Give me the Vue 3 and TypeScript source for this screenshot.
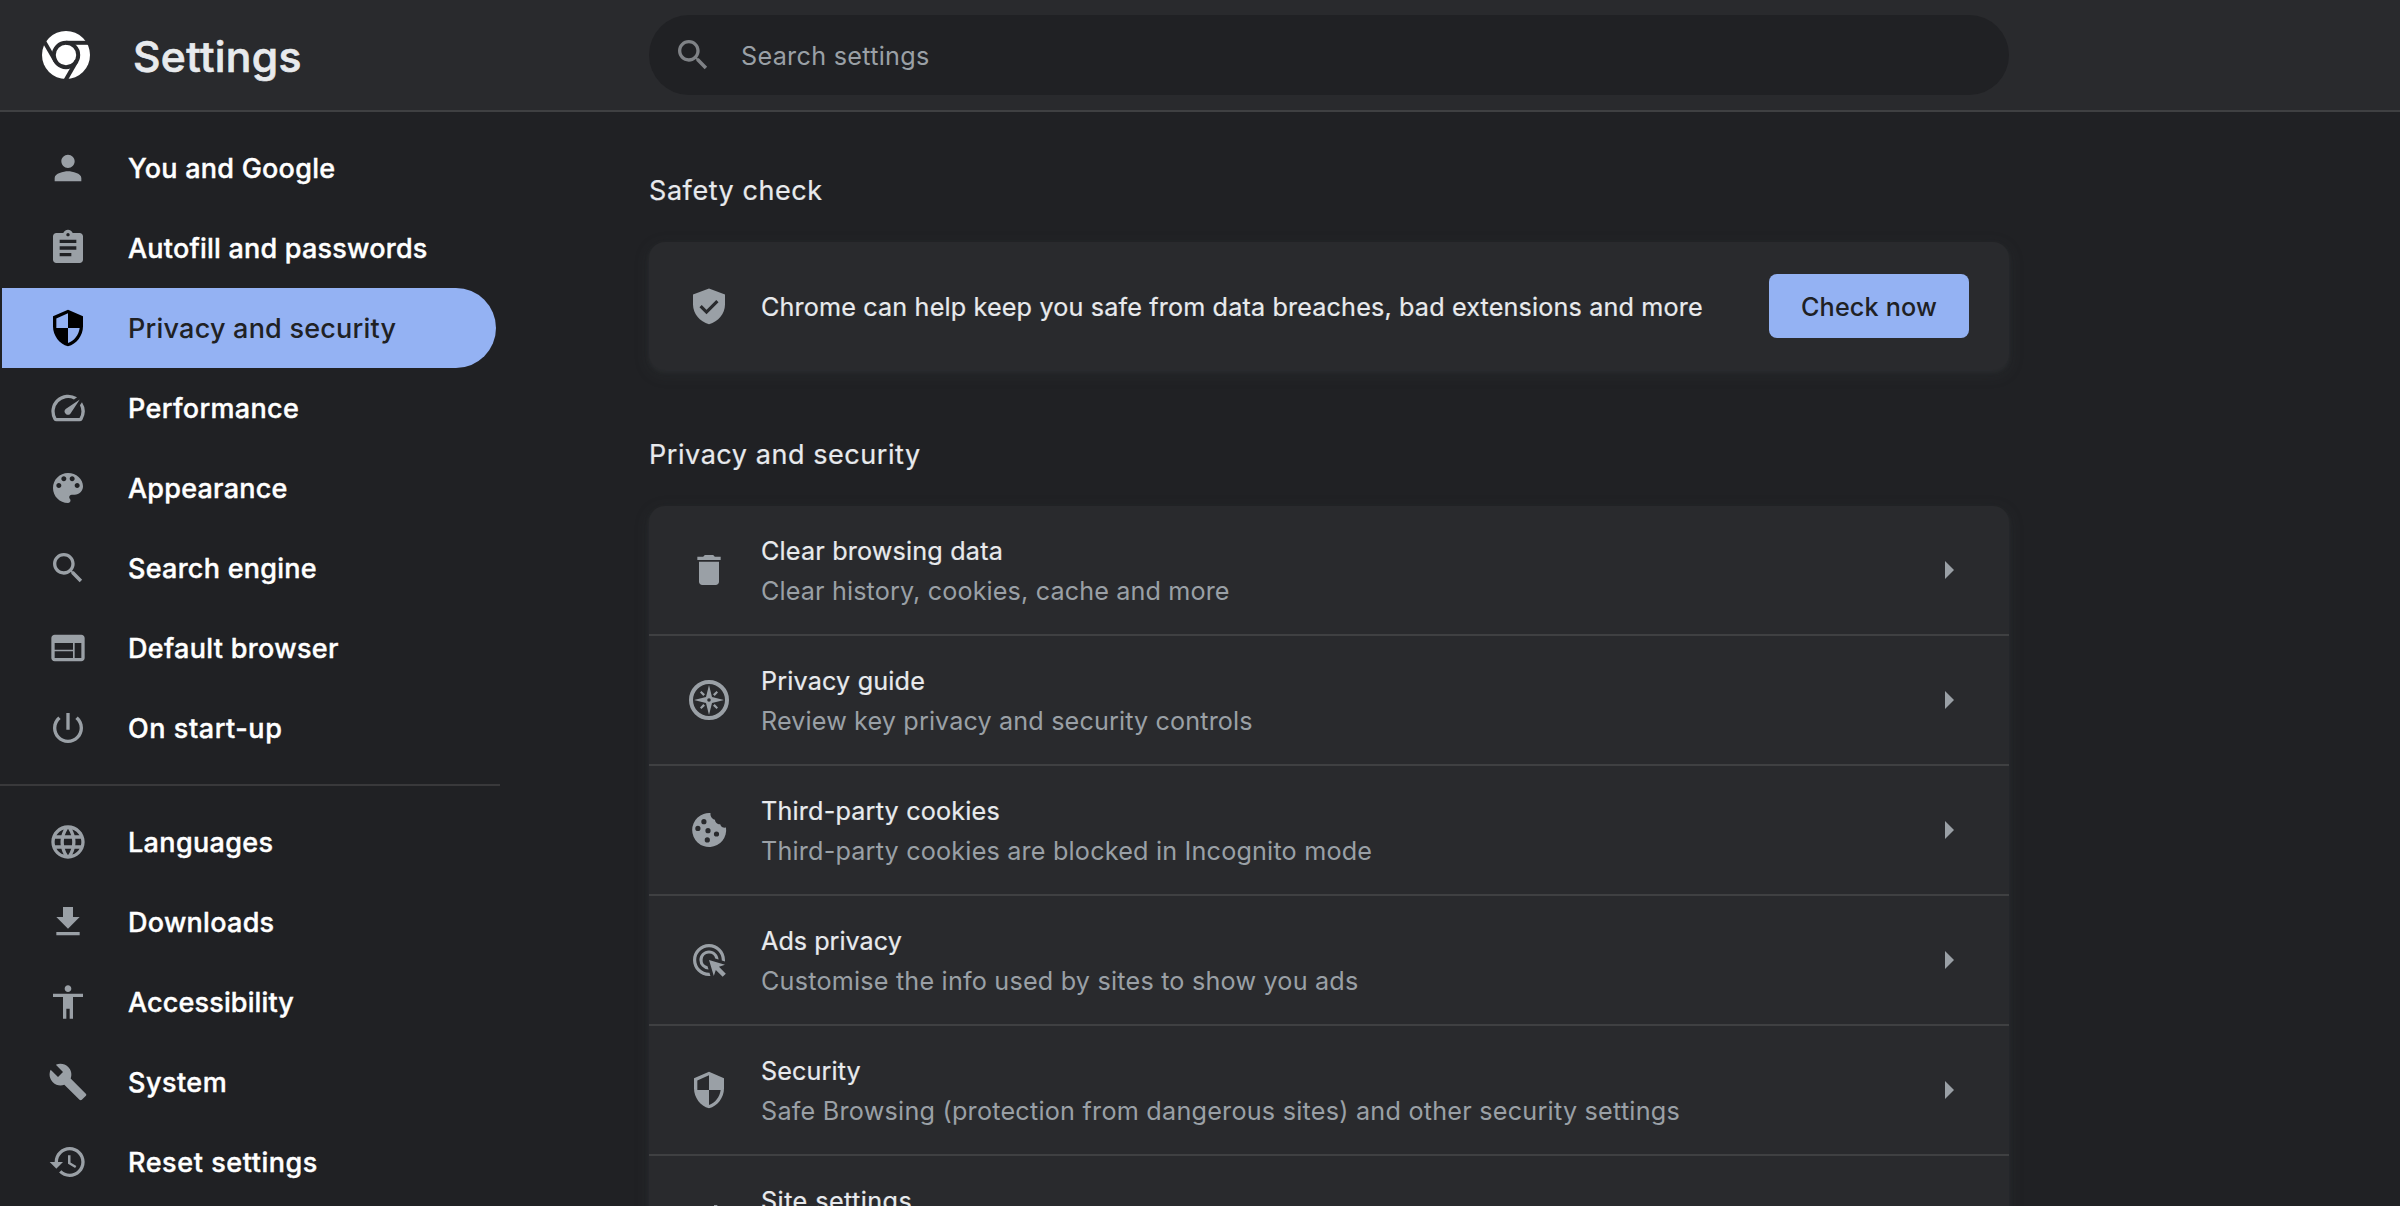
<script setup lang="ts">
interface NavItem {
  label: string
  icon: string
  tracking: number
  active?: boolean
}

interface SettingRow {
  title: string
  titleTracking: number
  sub: string
  subTracking: number
  icon: 'delete' | 'guide' | 'cookie' | 'ads' | 'security' | 'tune'
}

const shieldPath =
  'M12 1L3 5v6c0 5.55 3.84 10.74 9 12 5.16-1.26 9-6.45 9-12V5l-9-4zm0 10.99h7c-.53 4.12-3.28 7.79-7 8.94V12H5V6.3l7-3.11v8.8z'
const searchPath =
  'M15.5 14h-.79l-.28-.27C15.41 12.59 16 11.11 16 9.5 16 5.91 13.09 3 9.5 3S3 5.91 3 9.5 5.91 16 9.5 16c1.61 0 3.09-.59 4.23-1.57l.27.28v.79l5 4.99L20.49 19l-4.99-5zm-6 0C7.01 14 5 11.99 5 9.5S7.01 5 9.5 5 14 7.01 14 9.5 11.99 14 9.5 14z'

const primaryNav: NavItem[] = [
  {
    label: 'You and Google',
    tracking: 0.247,
    icon: 'M12 12c2.21 0 4-1.79 4-4s-1.79-4-4-4-4 1.79-4 4 1.79 4 4 4zm0 2c-2.67 0-8 1.34-8 4v2h16v-2c0-2.66-5.33-4-8-4z',
  },
  {
    label: 'Autofill and passwords',
    tracking: 0.22,
    icon: 'M19 3h-4.18C14.4 1.84 13.3 1 12 1c-1.3 0-2.4.84-2.82 2H5c-1.1 0-2 .9-2 2v14c0 1.1.9 2 2 2h14c1.1 0 2-.9 2-2V5c0-1.1-.9-2-2-2zm-7 0c.55 0 1 .45 1 1s-.45 1-1 1-1-.45-1-1 .45-1 1-1zm2 14H7v-2h7v2zm3-4H7v-2h10v2zm0-4H7V7h10v2z',
  },
  { label: 'Privacy and security', tracking: 0.216, icon: shieldPath, active: true },
  {
    label: 'Performance',
    tracking: 0.33,
    icon: 'M20.38 8.57l-1.23 1.85a8 8 0 0 1-.22 7.58H5.07A8 8 0 0 1 15.58 6.85l1.85-1.23A10 10 0 0 0 3.35 19a2 2 0 0 0 1.72 1h13.85a2 2 0 0 0 1.74-1 10 10 0 0 0-.27-10.44zm-9.79 6.84a2 2 0 0 0 2.83 0l5.66-8.49-8.49 5.66a2 2 0 0 0 0 2.83z',
  },
  {
    label: 'Appearance',
    tracking: 0.227,
    icon: 'M12 3c-4.97 0-9 4.03-9 9s4.03 9 9 9c.83 0 1.5-.67 1.5-1.5 0-.39-.15-.74-.39-1.01-.23-.26-.38-.61-.38-.99 0-.83.67-1.5 1.5-1.5H16c2.76 0 5-2.24 5-5 0-4.42-4.03-8-9-8zm-5.5 9c-.83 0-1.5-.67-1.5-1.5S5.67 9 6.5 9 8 9.67 8 10.5 7.33 12 6.5 12zm3-4C8.67 8 8 7.33 8 6.5S8.67 5 9.5 5s1.5.67 1.5 1.5S10.33 8 9.5 8zm5 0c-.83 0-1.5-.67-1.5-1.5S13.67 5 14.5 5s1.5.67 1.5 1.5S15.33 8 14.5 8zm3 4c-.83 0-1.5-.67-1.5-1.5S16.67 9 17.5 9s1.5.67 1.5 1.5-.67 1.5-1.5 1.5z',
  },
  { label: 'Search engine', tracking: 0.26, icon: searchPath },
  {
    label: 'Default browser',
    tracking: 0.32,
    icon: 'M20 4H4c-1.1 0-1.99.9-1.99 2L2 18c0 1.1.9 2 2 2h16c1.1 0 2-.9 2-2V6c0-1.1-.9-2-2-2zm-5 14H4v-4h11v4zm0-5H4V9h11v4zm5 5h-4V9h4v9z',
  },
  {
    label: 'On start-up',
    tracking: 0.55,
    icon: 'M13 3h-2v10h2V3zm4.83 2.17l-1.42 1.42C17.99 7.86 19 9.81 19 12c0 3.87-3.13 7-7 7s-7-3.13-7-7c0-2.19 1.01-4.14 2.58-5.42L6.17 5.17C4.23 6.82 3 9.26 3 12c0 4.97 4.03 9 9 9s9-4.03 9-9c0-2.74-1.23-5.18-3.17-6.83z',
  },
]

const secondaryNav: NavItem[] = [
  {
    label: 'Languages',
    tracking: 0.35,
    icon: 'M11.99 2C6.47 2 2 6.48 2 12s4.47 10 9.99 10C17.52 22 22 17.52 22 12S17.52 2 11.99 2zm6.93 6h-2.95c-.32-1.25-.78-2.45-1.38-3.56 1.84.63 3.37 1.91 4.33 3.56zM12 4.04c.83 1.2 1.48 2.53 1.91 3.96h-3.82c.43-1.43 1.08-2.76 1.91-3.96zM4.26 14C4.1 13.36 4 12.69 4 12s.1-1.36.26-2h3.38c-.08.66-.14 1.32-.14 2 0 .68.06 1.34.14 2H4.26zm.82 2h2.95c.32 1.25.78 2.45 1.38 3.56-1.84-.63-3.37-1.9-4.33-3.56zm2.95-8H5.08c.96-1.66 2.49-2.93 4.33-3.56C8.81 5.55 8.35 6.75 8.03 8zM12 19.96c-.83-1.2-1.48-2.53-1.91-3.96h3.82c-.43 1.43-1.08 2.76-1.91 3.96zM14.34 14H9.66c-.09-.66-.16-1.32-.16-2 0-.68.07-1.35.16-2h4.68c.09.65.16 1.32.16 2 0 .68-.07 1.34-.16 2zm.25 5.56c.6-1.11 1.06-2.31 1.38-3.56h2.95c-.96 1.65-2.49 2.93-4.33 3.56zM16.36 14c.08-.66.14-1.32.14-2 0-.68-.06-1.34-.14-2h3.38c.16.64.26 1.31.26 2s-.1 1.36-.26 2h-3.38z',
  },
  { label: 'Downloads', tracking: 0.28, icon: 'M19 9h-4V3H9v6H5l7 7 7-7zM5 18v2h14v-2H5z' },
  {
    label: 'Accessibility',
    tracking: 0.14,
    icon: 'M12 2c1.1 0 2 .9 2 2s-.9 2-2 2-2-.9-2-2 .9-2 2-2zm9 7h-6v13h-2v-6h-2v6H9V9H3V7h18v2z',
  },
  {
    label: 'System',
    tracking: 0.48,
    icon: 'M22.7 19l-9.1-9.1c.9-2.3.4-5-1.5-6.9-2-2-5-2.4-7.4-1.3L9 6 6 9 1.6 4.7C.4 7.1.9 10.1 2.9 12.1c1.9 1.9 4.6 2.4 6.9 1.5l9.1 9.1c.4.4 1 .4 1.4 0l2.3-2.3c.5-.4.5-1.1.1-1.4z',
  },
  {
    label: 'Reset settings',
    tracking: 0.56,
    icon: 'M13 3c-4.97 0-9 4.03-9 9H1l3.89 3.89.07.14L9 12H6c0-3.87 3.13-7 7-7s7 3.13 7 7-3.13 7-7 7c-1.93 0-3.68-.79-4.94-2.06l-1.42 1.42C8.27 19.99 10.51 21 13 21c4.97 0 9-4.03 9-9s-4.03-9-9-9zm-1 5v5l4.28 2.54.72-1.21-3.5-2.08V8H12z',
  },
]

const navGroups: NavItem[][] = [primaryNav, secondaryNav]

const rows: SettingRow[] = [
  {
    title: 'Clear browsing data',
    titleTracking: 0.17,
    sub: 'Clear history, cookies, cache and more',
    subTracking: 0.125,
    icon: 'delete',
  },
  {
    title: 'Privacy guide',
    titleTracking: 0.16,
    sub: 'Review key privacy and security controls',
    subTracking: 0.13,
    icon: 'guide',
  },
  {
    title: 'Third-party cookies',
    titleTracking: 0.18,
    sub: 'Third-party cookies are blocked in Incognito mode',
    subTracking: 0.185,
    icon: 'cookie',
  },
  {
    title: 'Ads privacy',
    titleTracking: 0,
    sub: 'Customise the info used by sites to show you ads',
    subTracking: 0.2,
    icon: 'ads',
  },
  {
    title: 'Security',
    titleTracking: 0.095,
    sub: 'Safe Browsing (protection from dangerous sites) and other security settings',
    subTracking: 0.232,
    icon: 'security',
  },
  { title: 'Site settings', titleTracking: 0.434, sub: '', subTracking: 0, icon: 'tune' },
]

const track = (px: number) => ({ letterSpacing: `${px}px` })
</script>

<template>
  <div class="page">
    <header class="toolbar">
      <div class="brand">
        <svg class="logo" viewBox="-24 -24 48 48">
          <circle r="24" fill="#fff" />
          <g class="logo-gap">
            <circle r="12.2" />
            <path d="M0-12.2H26" />
            <path d="M0-12.2H26" transform="rotate(120)" />
            <path d="M0-12.2H26" transform="rotate(240)" />
          </g>
        </svg>
        <h1>Settings</h1>
      </div>
      <div class="search">
        <svg class="icon" viewBox="0 0 24 24"><path :d="searchPath" /></svg>
        <span>Search settings</span>
      </div>
    </header>

    <div class="body">
      <nav class="sidebar">
        <ul v-for="(group, g) in navGroups" :key="g" class="group">
          <li v-for="item in group" :key="item.label" class="nav-item" :class="{ active: item.active }">
            <svg class="icon" viewBox="0 0 24 24"><path :d="item.icon" /></svg>
            <span :style="track(item.tracking)">{{ item.label }}</span>
          </li>
        </ul>
      </nav>

      <main class="content">
        <h2>Safety check</h2>
        <section class="card safety">
          <svg class="icon" viewBox="0 0 40 40">
            <path d="M20 1.4L36 7.4V17.6C36 26.6 29.4 34.8 20 37.2 10.6 34.8 4 26.6 4 17.6V7.4z" />
            <path class="check" d="M11.6 19.2l5.9 5.9L28.4 14.2" />
          </svg>
          <p>Chrome can help keep you safe from data breaches, bad extensions and more</p>
          <button type="button">Check now</button>
        </section>

        <h2 class="second">Privacy and security</h2>
        <section class="card">
          <div v-for="row in rows" :key="row.title" class="row">
            <svg v-if="row.icon === 'delete'" class="icon" viewBox="0 0 24 24">
              <path d="M6 19c0 1.1.9 2 2 2h8c1.1 0 2-.9 2-2V7H6v12zM19 4h-3.5l-1-1h-5l-1 1H5v2h14V4z" />
            </svg>
            <svg v-else-if="row.icon === 'guide'" class="icon" viewBox="0 0 40 40">
              <circle class="ring" cx="20" cy="20" r="18" />
              <path
                fill-rule="evenodd"
                d="M20 5l3 12 12 3-12 3-3 12-3-12-12-3 12-3zM20 18.2a1.8 1.8 0 1 0 0 3.6 1.8 1.8 0 0 0 0-3.6z"
              />
              <path
                d="M11 12.4l1.4-1.4 3.6 3.3-1.7 1.7zM29 12.4L27.6 11 24 14.3l1.7 1.7zM11 27.6l1.4 1.4 3.6-3.3-1.7-1.7zM29 27.6L27.6 29 24 25.7l1.7-1.7z"
              />
            </svg>
            <svg v-else-if="row.icon === 'cookie'" class="icon" viewBox="0 0 40 40">
              <path
                fill-rule="evenodd"
                d="M21.5 3.1A17 17 0 1 0 37 17.6C34.5 18 31.8 17 31.2 14.2 28.6 14.4 26 12.5 26 9.7 23.3 9.5 21 6.5 21.5 3.1zM14.9 9.1a2.6 2.6 0 1 1 0 5.2 2.6 2.6 0 0 1 0-5.2zM8.9 15.8a2.6 2.6 0 1 1 0 5.2 2.6 2.6 0 0 1 0-5.2zM19 18.1a2.6 2.6 0 1 1 0 5.2 2.6 2.6 0 0 1 0-5.2zM27.5 21.4a2.6 2.6 0 1 1 0 5.2 2.6 2.6 0 0 1 0-5.2zM18.3 27.3a2.6 2.6 0 1 1 0 5.2 2.6 2.6 0 0 1 0-5.2z"
              />
            </svg>
            <svg v-else-if="row.icon === 'ads'" class="icon" viewBox="-0.5 -0.5 25 25">
              <path
                d="M11.71 17.99A5.993 5.993 0 0 1 6 12c0-3.31 2.69-6 6-6 3.22 0 5.84 2.53 5.99 5.71l-2.1-.63a3.999 3.999 0 1 0-4.81 4.81l.63 2.1zM22 12c0 .3-.01.6-.04.9l-1.97-.59c.01-.1.01-.21.01-.31 0-4.42-3.58-8-8-8s-8 3.58-8 8 3.58 8 8 8c.1 0 .21 0 .31-.01l.59 1.97c-.3.03-.6.04-.9.04-5.52 0-10-4.48-10-10S6.48 2 12 2s10 4.48 10 10zm-3.77 4.26L22 15l-10-3 3 10 1.26-3.77 4.27 4.27 1.98-1.98-4.28-4.26z"
              />
            </svg>
            <svg v-else-if="row.icon === 'security'" class="icon" viewBox="0 0 24 24">
              <path :d="shieldPath" />
            </svg>
            <svg v-else class="icon" viewBox="0 0 24 24">
              <path
                d="M3 17v2h6v-2H3zM3 5v2h10V5H3zm10 16v-2h8v-2h-8v-2h-2v6h2zM7 9v2H3v2h4v2h2V9H7zm14 4v-2H11v2h10zm-6-4h2V7h4V5h-4V3h-2v6z"
              />
            </svg>
            <div class="text">
              <div class="title" :style="track(row.titleTracking)">{{ row.title }}</div>
              <div class="sub" :style="track(row.subTracking)">{{ row.sub }}</div>
            </div>
            <svg class="arrow" viewBox="0 0 9 18"><path d="M0 0l9 9-9 9z" /></svg>
          </div>
        </section>
      </main>
    </div>
  </div>
</template>

<style>
body {
  margin: 0;
  background: #202124;
}
</style>

<style scoped>
.page {
  width: 2400px;
  height: 1206px;
  overflow: hidden;
  display: flex;
  flex-direction: column;
  background: #202124;
  color: #e8eaed;
  font-family: Inter, 'Liberation Sans', sans-serif;
  font-size: 25.2px;
}

h1,
h2,
p,
ul {
  margin: 0;
  padding: 0;
  font-weight: 400;
}

.icon {
  flex: none;
  display: block;
  width: 40px;
  height: 40px;
  fill: #9aa0a6;
}

.toolbar {
  flex: none;
  display: flex;
  align-items: center;
  height: 110px;
  background: #292a2d;
  border-bottom: 2px solid #3f4042;
}

.brand {
  box-sizing: border-box;
  display: flex;
  align-items: center;
  gap: 43px;
  width: 649px;
  padding-left: 42px;
}

.logo {
  width: 48px;
  height: 48px;
}

.logo-gap {
  fill: none;
  stroke: #292a2d;
  stroke-width: 4;
}

h1 {
  padding-top: 3px;
  font-size: 42.6px;
  line-height: 56px;
  font-weight: 500;
  letter-spacing: 0.35px;
  -webkit-text-stroke: 0.7px currentColor;
}

.search {
  box-sizing: border-box;
  display: flex;
  align-items: center;
  gap: 28px;
  width: 1360px;
  height: 80px;
  padding-left: 24px;
  border-radius: 40px;
  background: #202124;
  color: #9aa0a6;
  letter-spacing: 0.29px;
}

.search .icon {
  fill: #7f8286;
}

.search span {
  padding-top: 2px;
}

.body {
  flex: 1;
  min-height: 0;
  display: flex;
}

.sidebar {
  flex: none;
  width: 500px;
  margin-right: 149px;
}

.group {
  padding: 16px 0;
  list-style: none;
}

.group + .group {
  border-top: 2px solid #39393b;
}

.nav-item {
  box-sizing: border-box;
  display: flex;
  align-items: center;
  gap: 40px;
  width: 494px;
  height: 80px;
  margin-left: 2px;
  padding-left: 46px;
  border-radius: 0 40px 40px 0;
  color: #fff;
  font-size: 27px;
  font-weight: 500;
  -webkit-text-stroke: 0.4px currentColor;
}

.nav-item.active {
  background: #94b2f3;
  color: #202124;
  -webkit-text-stroke-width: 0;
}

.nav-item.active .icon {
  fill: #000;
}

.content {
  width: 1360px;
}

h2 {
  margin: 59px 0 31px;
  font-size: 27px;
  line-height: 40px;
  letter-spacing: 0.563px;
  -webkit-text-stroke: 0.2px currentColor;
}

h2.second {
  margin-top: 65px;
  letter-spacing: 0.56px;
}

.card {
  border-radius: 16px;
  background: #292a2d;
  box-shadow:
    0 2px 4px rgba(60, 64, 67, 0.3),
    0 4px 12px 4px rgba(60, 64, 67, 0.15);
}

.safety {
  box-sizing: border-box;
  display: flex;
  align-items: center;
  height: 128px;
  padding: 0 40px;
}

.safety .icon {
  margin-top: 1px;
}

.safety .check {
  fill: none;
  stroke: #292a2d;
  stroke-width: 3.2;
}

.safety p {
  flex: 1;
  padding: 2px 0 0 32px;
  letter-spacing: 0.144px;
  white-space: nowrap;
  -webkit-text-stroke: 0.2px currentColor;
}

button {
  width: 200px;
  height: 64px;
  padding: 2px 0 0;
  border: 0;
  border-radius: 8px;
  background: #94b2f3;
  color: #202124;
  font: 500 25.2px Inter, 'Liberation Sans', sans-serif;
  letter-spacing: 0.162px;
}

.row {
  display: flex;
  align-items: center;
  height: 128px;
  padding: 0 55px 0 40px;
}

.row + .row {
  border-top: 2px solid #3f4042;
}

.ring {
  fill: none;
  stroke: #9aa0a6;
  stroke-width: 4;
}

.text {
  flex: 1;
  padding: 2px 0 0 32px;
  line-height: 40px;
  white-space: nowrap;
}

.title,
.sub {
  height: 40px;
}

.title {
  -webkit-text-stroke: 0.2px currentColor;
}

.sub {
  color: #9aa0a6;
}

.arrow {
  width: 9px;
  height: 18px;
  fill: #9aa0a6;
}
</style>
